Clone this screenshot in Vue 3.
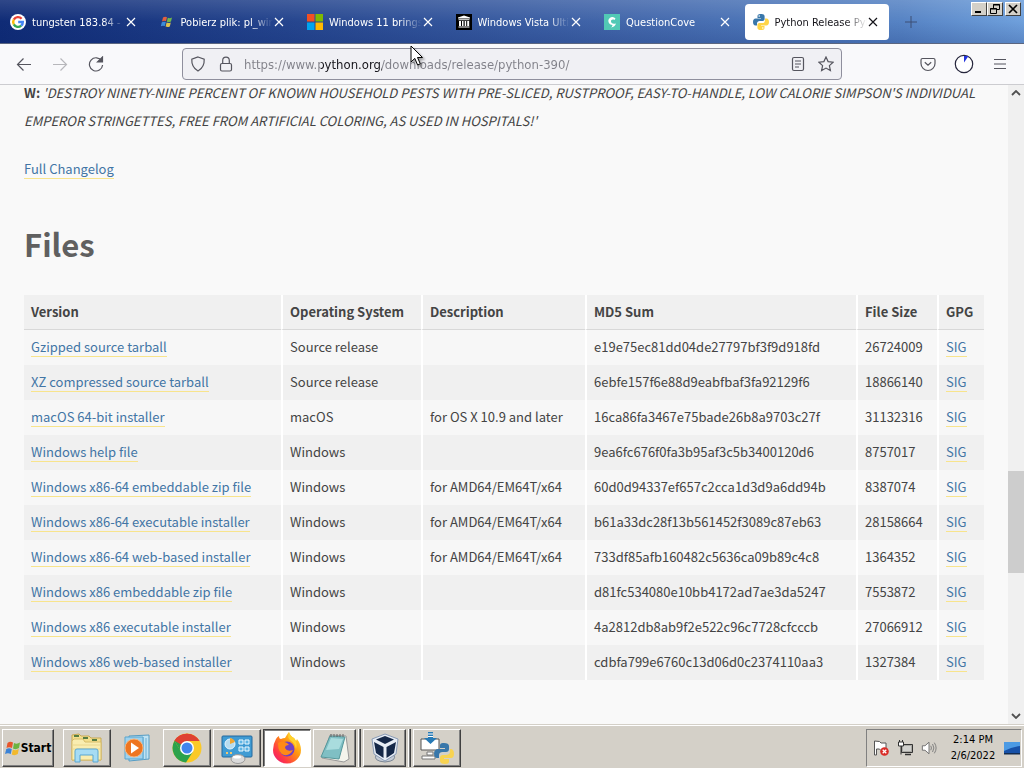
<script setup>
import { ref } from 'vue'

const tabs = [
  { icon: 'google', title: 'tungsten 183.84 - Google' },
  { icon: 'windows', title: 'Pobierz plik: pl_windows' },
  { icon: 'microsoft', title: 'Windows 11 brings you' },
  { icon: 'archive', title: 'Windows Vista Ultimate' },
  { icon: 'cove', title: 'QuestionCove' },
  { icon: 'python', title: 'Python Release Python', active: true },
]

const url = ref('https://www.python.org/downloads/release/python-390/')

const files = [
  ['Gzipped source tarball', 'Source release', '', 'e19e75ec81dd04de27797bf3f9d918fd', '26724009'],
  ['XZ compressed source tarball', 'Source release', '', '6ebfe157f6e88d9eabfbaf3fa92129f6', '18866140'],
  ['macOS 64-bit installer', 'macOS', 'for OS X 10.9 and later', '16ca86fa3467e75bade26b8a9703c27f', '31132316'],
  ['Windows help file', 'Windows', '', '9ea6fc676f0fa3b95af3c5b3400120d6', '8757017'],
  ['Windows x86-64 embeddable zip file', 'Windows', 'for AMD64/EM64T/x64', '60d0d94337ef657c2cca1d3d9a6dd94b', '8387074'],
  ['Windows x86-64 executable installer', 'Windows', 'for AMD64/EM64T/x64', 'b61a33dc28f13b561452f3089c87eb63', '28158664'],
  ['Windows x86-64 web-based installer', 'Windows', 'for AMD64/EM64T/x64', '733df85afb160482c5636ca09b89c4c8', '1364352'],
  ['Windows x86 embeddable zip file', 'Windows', '', 'd81fc534080e10bb4172ad7ae3da5247', '7553872'],
  ['Windows x86 executable installer', 'Windows', '', '4a2812db8ab9f2e522c96c7728cfcccb', '27066912'],
  ['Windows x86 web-based installer', 'Windows', '', 'cdbfa799e6760c13d06d0c2374110aa3', '1327384'],
]
</script>

<template>
  <div class="screen">
    <header class="tabstrip">
      <nav class="tabs" aria-label="Tabs">
        <div v-for="t in tabs" :key="t.title" class="tab" :class="{ active: t.active }">
          <svg class="favicon" viewBox="0 0 16 16" aria-hidden="true">
            <g v-if="t.icon === 'google'">
              <circle cx="8" cy="8" r="8" fill="#fff" />
              <g fill="none" stroke-width="2.4">
                <path d="M11.6 4.7A4.8 4.8 0 0 0 3.8 5.6" stroke="#ea4335" />
                <path d="M3.8 5.6a4.9 4.9 0 0 0 0 4.8" stroke="#fbbc05" />
                <path d="M3.8 10.4a4.8 4.8 0 0 0 7.4 1.3" stroke="#34a853" />
                <path d="M11.2 11.7A4.8 4.8 0 0 0 12.8 8H8.2" stroke="#4285f4" />
              </g>
            </g>
            <g v-else-if="t.icon === 'windows'">
              <path d="M4 3.5q2-1.3 4-.2l-1 4q-2-1-4 .2z" fill="#e2603e" />
              <path d="M8.8 3.8q2 1 4.2-.2l-1 4q-2 1.200-4.200 .2z" fill="#72b84c" />
              <path d="M2.8 8.300q2-1.200 4-.2l-1 4q-2-1-4 .2z" fill="#3b8bd8" />
              <path d="M7.600 8.600q2 1 4.200-.2l-1 4q-2 1.200-4.200 .2z" fill="#e0c24c" />
            </g>
            <g v-else-if="t.icon === 'microsoft'">
              <path d="M0 0h7.500v7.500H0z" fill="#f25022" /><path d="M8.500 0H16v7.500H8.500z" fill="#7fba00" />
              <path d="M0 8.500h7.500V16H0z" fill="#00a4ef" /><path d="M8.500 8.500H16V16H8.500z" fill="#ffb900" />
            </g>
            <g v-else-if="t.icon === 'archive'">
              <path d="M0 0h16v16H0z" fill="#000" />
              <path d="M8 1.500l6 2v1H2v-1zM2.500 5.300h11v1h-11zM3 7h2v5H3zM6 7h1.500v5H6zM8.700 7h1.500v5H8.700zM11.200 7h2v5h-2zM2.500 12.500h11v1h-11z" fill="#fff" />
            </g>
            <g v-else-if="t.icon === 'cove'">
              <path d="M0 0h16v16H0z" fill="#52c9b5" />
              <path d="M11.500 4.500A4 4 0 1 0 8.500 11q-.2 1.500-1.500 2.500 4-.5 5-4-3 1-4.500-.8C6 6.500 8 4.600 10.500 6z" fill="#fff" />
            </g>
            <g v-else>
              <path d="M7.900 0C4.800 0 4.500 1.300 4.500 2.300V4H8v.6H2.600C1 4.600 0 5.900 0 8c0 2.200 1 3.500 2.400 3.500H4V9.600C4 8 5.200 7 6.600 7h3c1.200 0 2-.9 2-2V2.300C11.600.8 10.200 0 7.900 0z" fill="#3977aa" />
              <path d="M8.100 16c3.100 0 3.400-1.300 3.400-2.300V12H8v-.6h5.400c1.600 0 2.600-1.300 2.600-3.400 0-2.200-1-3.500-2.400-3.500H12v1.900C12 8 10.800 9 9.400 9h-3c-1.200 0-2 .9-2 2v2.700C4.400 15.200 5.800 16 8.100 16z" fill="#ffd546" />
              <circle cx="6.200" cy="2" r=".8" fill="#fff" /><circle cx="9.800" cy="14" r=".8" fill="#fff" />
            </g>
          </svg>
          <span class="title">{{ t.title }}</span>
          <button class="close" aria-label="Close tab">
            <svg viewBox="0 0 10 10"><path d="M1 1l8 8M9 1L1 9" /></svg>
          </button>
        </div>
      </nav>
      <button class="newtab" aria-label="New tab"><svg viewBox="0 0 12 12"><path d="M6 0v12M0 6h12" /></svg></button>
      <div class="winctl">
        <button aria-label="Minimize"><svg viewBox="0 0 12 10"><path d="M2 8h6" stroke="#000" stroke-width="2" /></svg></button>
        <button aria-label="Restore"><svg viewBox="0 0 12 10"><path d="M4.500 4V.5h6v5H8M4 1h7M1.500 4.500h6v5h-6zM1 5h7" fill="none" stroke="#000" /></svg></button>
        <button class="x" aria-label="Close"><svg viewBox="0 0 12 10"><path d="M2 1l8 8M10 1L2 9" stroke="#000" stroke-width="1.700" /></svg></button>
      </div>
    </header>

    <div class="toolbar">
      <div class="group">
        <button aria-label="Back"><svg viewBox="0 0 16 16"><path d="M15 8.500H1.500M7.500 2.500l-6 6 6 6" /></svg></button>
        <button class="off" aria-label="Forward"><svg viewBox="0 0 16 16"><path d="M1 8.500h13.500M8.500 2.500l6 6-6 6" /></svg></button>
        <button aria-label="Reload"><svg viewBox="0 0 16 16"><path d="M13.700 5A6.600 6.600 0 1 0 14.600 9" /><path d="M14.500 1v5h-5z" fill="#55555e" /></svg></button>
      </div>
      <div class="urlbar">
        <svg viewBox="0 0 16 16"><path d="M8 1l6.200 2.200c.3 5-1.500 9-6.200 11.800C3.300 12.200 1.500 8.200 1.800 3.200z" /></svg>
        <svg class="lock" viewBox="0 0 16 16"><rect x="2.500" y="7.500" width="11" height="7.500" rx="1.500" /><path d="M4.700 7.500V4.400a3.300 3.300 0 0 1 6.600 0v3.100" /></svg>
        <input v-model="url" type="text" aria-label="Address" spellcheck="false" />
        <button aria-label="Reader view"><svg viewBox="0 0 16 16"><rect x="2.500" y="1.500" width="11" height="13" rx="1.500" /><path d="M5 5h6M5 8h6M5 11h4" /></svg></button>
        <button aria-label="Bookmark"><svg viewBox="0 0 16 16"><path d="M8 1l2.100 4.600 5 .6-3.700 3.400 1 5L8 12.100l-4.400 2.500 1-5L.9 6.200l5-.6z" /></svg></button>
      </div>
      <div class="group">
        <button aria-label="Pocket"><svg viewBox="0 0 16 16"><path d="M2.500 2.500h11q1.500 0 1.500 1.500v3.500a7 7 0 0 1-14 0V4q0-1.500 1.500-1.500zM4.800 6.300L8 9.300l3.200-3" /></svg></button>
        <button aria-label="Extension"><svg class="dial" viewBox="0 0 20 20"><circle cx="10" cy="10" r="8.700" fill="#fff" stroke="#26263c" stroke-width="1.200" /><path d="M10 2h4.500L10 8.500z" fill="#2233dd" stroke="none" /></svg></button>
        <button aria-label="Menu"><svg viewBox="0 0 16 16"><path d="M2 3.500h12M2 8h12M2 12.500h12" /></svg></button>
      </div>
    </div>

    <div class="viewport">
      <main>
        <p class="quote"><b>W:</b> <i>'DESTROY NINETY-NINE PERCENT OF KNOWN HOUSEHOLD PESTS WITH PRE-SLICED, RUSTPROOF, EASY-TO-HANDLE, LOW CALORIE SIMPSON'S INDIVIDUAL EMPEROR STRINGETTES, FREE FROM ARTIFICIAL COLORING, AS USED IN HOSPITALS!'</i></p>
        <p class="log"><a href="#">Full Changelog</a></p>
        <h1>Files</h1>
        <table>
          <colgroup><col /><col class="os" /><col class="desc" /><col class="md5" /><col class="size" /><col class="gpg" /></colgroup>
          <thead>
            <tr><th>Version</th><th>Operating System</th><th>Description</th><th>MD5 Sum</th><th>File Size</th><th>GPG</th></tr>
          </thead>
          <tbody>
            <tr v-for="f in files" :key="f[0]">
              <td><a href="#">{{ f[0] }}</a></td>
              <td>{{ f[1] }}</td><td>{{ f[2] }}</td><td>{{ f[3] }}</td><td>{{ f[4] }}</td>
              <td><a href="#">SIG</a></td>
            </tr>
          </tbody>
        </table>
      </main>
      <div class="scroll" aria-hidden="true">
        <svg viewBox="0 0 10 6"><path d="M1 5l4-4 4 4" /></svg>
        <div class="track"><div class="thumb"></div></div>
        <svg viewBox="0 0 10 6"><path d="M1 1l4 4 4-4" /></svg>
      </div>
    </div>

    <footer class="taskbar">
      <button class="start raised">
        <svg viewBox="0 0 16 16" aria-hidden="true">
          <path d="M2.500 3Q5 1 8 2.500L7 8Q4 6.500 1.500 8z" fill="#e8552b" /><path d="M9 3q3 1.500 6-.5L14 8q-3 2-6 .5z" fill="#6db33f" />
          <path d="M1.300 9Q4 7.500 6.800 9l-1 5Q3 12.500 0 14z" fill="#3c83d6" /><path d="M7.800 9.500q3 1.500 6-.5l-1 5q-3 2-6 .5z" fill="#f2b92d" />
        </svg>
        <span>Start</span>
      </button>
      <div class="apps">
        <button class="raised" aria-label="Explorer">
          <svg viewBox="0 0 36 32">
            <path d="M3 3l7-1 2 2h8l2 2h10v22H3z" fill="#f3df8d" stroke="#c7a954" />
            <path d="M5 7h9l2 3h16v18H3V9z" fill="#f9edb0" stroke="#d7bd6a" />
            <path d="M5 3h5v2H5zM14 5h5v2h-5zM23 7h5v2h-5z" fill="#567d43" />
            <path d="M3 13h29M3 17h29" stroke="#ead68c" />
            <path d="M6 30V19q0-2 2-2h19q2 0 2 2v11h-5v-7H11v7z" fill="#a6dcf4" stroke="#5ba7d2" />
          </svg>
        </button>
        <button class="flat" aria-label="Media Player">
          <svg viewBox="0 0 36 32">
            <path d="M10 4l20-1v24l-20 2z" fill="#c1e3f3" stroke="#559cc4" /><path d="M27 6v21M24 5v23" stroke="#6eb1d5" />
            <path d="M6 5h18v22H6z" fill="#9ed2ee" stroke="#5ba5cd" />
            <circle cx="15" cy="16" r="9" fill="#ee7520" stroke="#f9b47a" /><path d="M12 10.500l8 5.500-8 5.500z" fill="#fff" />
          </svg>
        </button>
        <button class="raised" aria-label="Chrome">
          <svg viewBox="0 0 32 32">
            <circle cx="16" cy="16" r="14.500" fill="#fbc926" />
            <path d="M16 16L3.500 8.700A14.500 14.500 0 0 1 28.500 9H16z" fill="#df4132" />
            <path d="M3.500 8.700A14.500 14.500 0 0 0 15 30.500L22 19.500 16 16 10 19.500z" fill="#2ba24c" />
            <path d="M3.500 8.700L9.900 19.500 16 16V9z" fill="#2ba24c" /><path d="M3.500 8.700L9.900 12.500 16 9h12.500A14.500 14.500 0 0 0 3.500 8.700z" fill="#df4132" />
            <circle cx="16" cy="16" r="7" fill="#fff" /><circle cx="16" cy="16" r="5.500" fill="#4285ed" />
          </svg>
        </button>
        <button class="raised" aria-label="Control Panel">
          <svg viewBox="0 0 36 32">
            <rect x="3" y="4" width="30" height="21" rx="1" fill="#3f9bd3" stroke="#24699d" />
            <circle cx="11" cy="12" r="5" fill="#b7dcef" stroke="#e7f6ff" /><path d="M11 12V6a6 6 0 0 1 5 4z" fill="#f1a734" />
            <path d="M20 8h4v4h-4zM26 8h4v4h-4zM20 15h4v4h-4zM26 15h4v4h-4z" fill="#5fb5e4" stroke="#eefaff" />
            <path d="M7 21h2M11 21h2" stroke="#f5c76b" stroke-width="2" />
            <ellipse cx="19" cy="27" rx="7" ry="4.500" fill="#dadada" stroke="#999" /><ellipse cx="18" cy="25" rx="4" ry="1.500" fill="#fff" />
          </svg>
        </button>
        <button class="pressed" aria-label="Firefox">
          <svg viewBox="0 0 32 32">
            <defs><linearGradient id="fox" x1="1" y1="0" x2="0" y2="1"><stop offset="0" stop-color="#fff24a" /><stop offset=".4" stop-color="#ff980e" /><stop offset=".75" stop-color="#ff3647" /><stop offset="1" stop-color="#e31587" /></linearGradient></defs>
            <path d="M5 7q1-2 3-3 0 3 2 3 2-1 4-1 3-5 4-6 1 4 5 6 1 1 2 3l1-2q4 5 4 11a14 13.500 0 0 1-28 0Q2 12 5 7z" fill="url(#fox)" />
            <circle cx="16" cy="17" r="7.500" fill="#7040c4" />
            <path d="M7 11q4-3 9 0l2 2q-4 0-4 3 2 4 8 2-3 6-9 5-6-2-6-12z" fill="#ff8a16" />
            <path d="M18 0q1 4 5 6 4 5 2 11-1-6-6-9-3-3-1-8z" fill="#ffd22e" />
          </svg>
        </button>
        <button class="raised stack" aria-label="Notepad">
          <svg viewBox="0 0 36 32">
            <path d="M13 3l16 1 3 23-5 3L5 26z" fill="#f4f4ec" stroke="#999" /><path d="M13 4l15 1-6 22L4 25z" fill="#7fbfc4" stroke="#55979b" />
            <path d="M14 6l12 1-4 10L9 18z" fill="#a9dcde" /><path d="M14 5V2M17 5V2M20 5V2M23 5V2M26 5V2" stroke="#666" />
          </svg>
        </button>
        <button class="raised stack" aria-label="VirtualBox">
          <svg viewBox="0 0 32 32">
            <path d="M7 23q-3 6 9 7 12-1 9-7z" fill="#c5ccd6" stroke="#7c8794" />
            <path d="M16 2l13 5-2 15-11 7L5 22 3 7z" fill="#e7edf5" stroke="#899bb5" />
            <path d="M16 4l9 3.500-9 4.500-9-4.500zM5 10l9.500 5v11L7 21zM27 10l-9.500 5v11L25 21z" fill="#152848" />
          </svg>
        </button>
        <button class="raised" aria-label="Python installer">
          <svg viewBox="0 0 36 32">
            <path d="M2 7h18v11H2z" fill="#fff" stroke="#555" /><path d="M8 20h6v3H8zM3 24h13v3H3z" fill="#fff" stroke="#777" />
            <path d="M9 0h5v6h4l-6.500 6L5 6h4z" fill="#287ab5" /><path d="M9 2h5M9 4.500h5" stroke="#fff" />
            <g transform="translate(15 11)"><path d="M10 0C6 0 6 1.500 6 3v2h5v1H4C2 6 0 7.500 0 10.500S1.500 15 3 15h2v-3c0-2 1.500-3 3.500-3H12q3 0 3-3V3c0-2-2-3-5-3z" fill="#3977aa" /><path d="M11 21c4 0 4-1.500 4-3v-2h-5v-1h7c2 0 3-1.500 3-4.500S18.500 6 17 6h-1v3c0 2-2 3-4 3H9q-3 0-3 3v3c0 2 2 3 5 3z" fill="#f8d351" /></g>
          </svg>
        </button>
      </div>
      <div class="tray">
        <svg viewBox="0 0 16 16"><path d="M1.500 1v14h2V9h3l1.500 1.500h5V3H8L6.500 1.500z" fill="#fff" stroke="#555" /><circle cx="11.500" cy="11.500" r="4.300" fill="#d92c27" /><path d="M9.700 9.700l3.600 3.600M13.300 9.700l-3.600 3.600" stroke="#fff" stroke-width="1.300" /></svg>
        <svg viewBox="0 0 16 16"><path d="M4.500 4.500h11v8h-11z" fill="#aaa9a4" stroke="#333" /><path d="M6 6h8v5H6z" fill="#fff" opacity=".45" /><path d="M8 14.500h6" stroke="#333" stroke-width="1.500" /><path d="M1.500 2v4h5V2zM2.500 0v2M5.500 0v2M4 6v8.500" fill="#fff" stroke="#333" /></svg>
        <svg viewBox="0 0 18 16"><path d="M1.500 5.500h3L9 1.500v13l-4.500-4h-3z" fill="#fff" stroke="#666" /><path d="M11 5.500q1.500 2.500 0 5M13 3.500q3 4.500 0 9M15 2q4 6 0 12" fill="none" stroke="#777" /></svg>
        <div class="clock"><span>2:14 PM</span><span>2/6/2022</span></div>
        <button class="desk" aria-label="Show desktop"><svg viewBox="0 0 16 16"><path d="M0 2h16v12H0z" fill="#1751a8" /><path d="M0 2h16v4Q8 7 0 11z" fill="#4b9ae4" /><path d="M0 13h16v1.500H0z" fill="#132c50" /></svg></button>
      </div>
    </footer>

    <svg class="pointer" viewBox="0 0 14 22" aria-hidden="true"><path d="M1 1v16l3.800-3.600L7.600 20l2.700-1.200-2.800-6.300h5z" fill="#fff" stroke="#000" /></svg>
  </div>
</template>

<style>
body { margin: 0; }
</style>

<style scoped>
* { box-sizing: border-box; }
.screen { position: relative; display: flex; flex-direction: column; height: 100vh; overflow: hidden; background: #f9f9fa; font-family: "DejaVu Sans Condensed", "Noto Sans", sans-serif; font-size: 11px; }
button { display: flex; align-items: center; justify-content: center; padding: 0; border: 0; background: none; color: inherit; font: inherit; }

.tabstrip { display: flex; height: 44px; padding: 0 3px 0 2px; border-bottom: 1px solid #5b6680; background: linear-gradient(#ffffff22, #ffffff00 50%, #0a246a33), linear-gradient(90deg, #0f2b76, #25458e 28%, #4266aa 60%, #5683c4 88%, #6fa0dc); flex: none; }
.tabs { display: flex; gap: 4px; flex: 1; min-width: 0; padding: 4px 0 3px; }
.tab { display: flex; align-items: center; flex: 1; min-width: 0; padding: 0 10px 0 8px; border-radius: 4px; color: #fff; }
.tab.active { background: #fff; color: #15141a; }
.favicon { width: 16px; height: 16px; flex: none; }
.title { flex: 1; min-width: 0; margin-left: 6px; padding-top: 1px; line-height: 16px; overflow: hidden; white-space: nowrap; mask-image: linear-gradient(90deg, #000 76%, transparent); }
.close { width: 12px; height: 16px; flex: none; }
.close svg { width: 10px; height: 10px; fill: none; stroke: currentColor; stroke-width: 1.2; }
.newtab { width: 44px; margin-right: 38px; }
.newtab svg { width: 12px; height: 12px; stroke: #3c4f74; }
.winctl { display: flex; width: 50px; padding-top: 2px; align-items: flex-start; }
.winctl button { width: 16px; height: 14px; background: #d4d0c8; border: 1px solid; border-color: #fff #404040 #404040 #fff; }
.winctl .x { margin-left: 2px; }
.winctl svg { width: 12px; height: 10px; }

.toolbar { display: flex; align-items: center; justify-content: space-between; height: 41px; padding: 0 6px; background: #f9f9fb; border-bottom: 1px solid #ccccd0; flex: none; }
.group { display: flex; }
.group button { width: 36px; height: 32px; }
.toolbar svg { width: 16px; height: 16px; fill: none; stroke: #55555e; stroke-width: 1.2; flex: none; }
.toolbar .off { opacity: .4; }
.toolbar .dial { width: 20px; height: 20px; }
.urlbar { display: flex; align-items: center; flex: 1; height: 32px; margin: 0 68px; padding: 0 7px; border: 1px solid #8f8f9d; border-radius: 4px; background: #f0f0f4; }
.urlbar .lock { margin-left: 12px; }
.urlbar input { flex: 1; min-width: 0; height: 24px; margin-left: 10px; padding: 0; border: 0; outline: 0; font: 13px "DejaVu Sans Condensed", "Noto Sans", sans-serif; background: linear-gradient(90deg, #808088 77px, #15141a 77px, #15141a 138px, #808088 138px); background-clip: text; -webkit-text-fill-color: transparent; }
.urlbar button { width: 16px; height: 24px; margin-left: 12px; }

.viewport { display: flex; flex: 1; min-height: 0; font-family: "Noto Sans CJK SC", "Noto Sans", sans-serif; font-size: 13px; color: #444; }
main { flex: 1; min-width: 0; padding: 0 24px; overflow: hidden; background: #f9f9f9; }
p { margin: 0; line-height: 28px; }
.quote { margin-top: -6px; }
.log { margin-top: 20px; }
a { color: #4275a5; text-decoration: none; border-bottom: 1px solid #f8e48c; line-height: 18px; display: inline-block; }
h1 { margin: 38px 0 28px; font-size: 31px; line-height: 46px; font-weight: 700; color: #606060; }
table { width: 100%; table-layout: fixed; border-collapse: separate; border-spacing: 0; }
.os { width: 140px; }
.desc { width: 164px; }
.md5 { width: 271px; }
.size { width: 81px; }
.gpg { width: 47px; }
th, td { padding: 0 0 1px 7px; height: 35px; line-height: 20px; text-align: left; white-space: nowrap; border-left: 2px solid #fff; }
th:first-child, td:first-child { border-left: 0; }
th { background: #f0f0f0; border-bottom: 1px solid #d8d8d8; font-weight: 700; }
td { background: #f7f7f7; }
tr:nth-child(even) td { background: #f0f0f0; }

.scroll { display: flex; flex-direction: column; align-items: center; width: 16px; padding: 5px 0; background: #f0f0f0; }
.scroll svg { width: 10px; height: 6px; fill: none; stroke: #505050; stroke-width: 1.8; flex: none; }
.track { display: flex; flex-direction: column; flex: 1; width: 100%; padding: 375px 0 140px; }
.thumb { flex: 1; background: #cdcdcd; }

.taskbar { display: flex; align-items: center; height: 44px; padding: 2px 2px 0; background: #d4d0c8; border-top: 1px solid #d4d0c8; box-shadow: inset 0 1px #fff; flex: none; color: #000; }
.raised { border: 1px solid; border-color: #fff #404040 #404040 #fff; box-shadow: inset -1px -1px #808080; }
.start { width: 52px; height: 38px; font: bold 12px "DejaVu Sans Condensed", "Noto Sans", sans-serif; }
.start svg { width: 16px; height: 16px; flex: none; }
.apps { display: flex; gap: 2px; margin-left: 9px; }
.apps button { width: 48px; height: 38px; }
.apps svg { width: 36px; height: 32px; }
.apps .pressed { background: #fff; border: 1px solid; border-color: #404040 #fff #fff #404040; box-shadow: inset 1px 1px #808080; }
.apps .stack { width: 43px; margin-right: 5px; box-shadow: inset -1px -1px #808080, 2px 0 #d4d0c8, 3px 0 #fff, 4px 0 #808080, 5px 0 #404040; }
.tray { display: flex; align-items: center; height: 38px; margin-left: auto; padding: 0 1px 0 6px; border: 1px solid; border-color: #808080 #fff #fff #808080; }
.tray svg { width: 16px; height: 16px; margin-right: 8px; }
.clock { display: flex; flex-direction: column; align-items: center; width: 56px; line-height: 16px; white-space: nowrap; }
.tray .desk svg { margin: 0; }
.desk { margin-left: 3px; }
.pointer { position: absolute; left: 410px; top: 45px; width: 14px; height: 22px; filter: drop-shadow(2px 2px 1px #0005); }
</style>
